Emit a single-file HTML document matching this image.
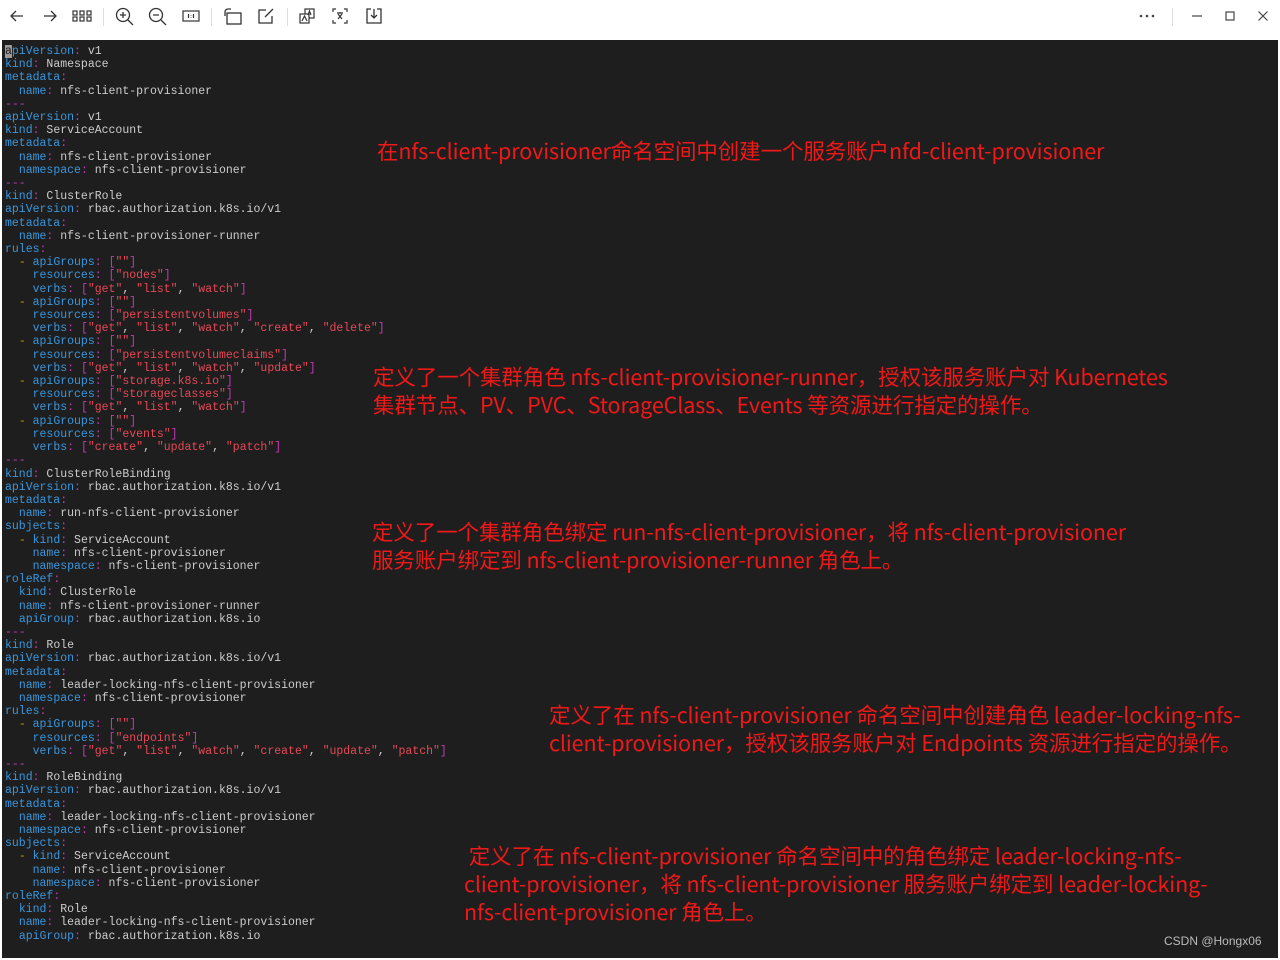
<!DOCTYPE html>
<html><head><meta charset="utf-8"><style>
html,body{margin:0;padding:0;width:1280px;height:960px;overflow:hidden;background:#fff;}
.tb{position:absolute;left:0;top:0;width:1280px;height:40px;background:#fff;}
.tb svg{position:absolute;top:7px;}
.sep{position:absolute;top:8px;width:1px;height:18px;background:#ddd;}
.dark{position:absolute;left:2px;top:40px;width:1276px;height:918px;background:#1e1e1e;}
pre{position:absolute;left:5px;top:45px;margin:0;font-family:"Liberation Mono",monospace;font-size:11.5px;line-height:13.21px;color:#cccccc;}
.k{color:#3a96dd}.c{color:#c239b3}.s{color:#e74856}.d{color:#c19c00}
.cur{background:#9a9a9a;color:#1e1e1e}
.a{position:absolute;color:#f01818;font-family:"Noto Sans CJK SC","Liberation Sans",sans-serif;font-size:21.5px;line-height:28px;white-space:nowrap;letter-spacing:-0.1px}
.wm{position:absolute;left:1164px;top:934px;color:#bbb;font-family:"Liberation Sans",sans-serif;font-size:12px;}
</style></head><body>
<div class="tb">
<svg style="left:8px" width="18" height="18" viewBox="0 0 18 18" fill="none" stroke="#333" stroke-width="1.3"><path d="M15 9H3M8 4L3 9l5 5"/></svg>
<svg style="left:41px" width="18" height="18" viewBox="0 0 18 18" fill="none" stroke="#333" stroke-width="1.3"><path d="M3 9h12M10 4l5 5-5 5"/></svg>
<svg style="left:72px" width="20" height="18" viewBox="0 0 20 18" fill="none" stroke="#333" stroke-width="1.2"><rect x="1" y="4" width="4" height="4"/><rect x="8" y="4" width="4" height="4"/><rect x="15" y="4" width="4" height="4"/><rect x="1" y="10" width="4" height="4"/><rect x="8" y="10" width="4" height="4"/><rect x="15" y="10" width="4" height="4"/></svg>
<div class="sep" style="left:103px"></div>
<svg style="left:115px" width="20" height="20" viewBox="0 0 20 20" fill="none" stroke="#333" stroke-width="1.3"><circle cx="8" cy="8" r="6.5"/><path d="M13 13l5 5M5 8h6M8 5v6"/></svg>
<svg style="left:148px" width="20" height="20" viewBox="0 0 20 20" fill="none" stroke="#333" stroke-width="1.3"><circle cx="8" cy="8" r="6.5"/><path d="M13 13l5 5M5 8h6"/></svg>
<svg style="left:181px" width="20" height="18" viewBox="0 0 20 18" fill="none" stroke="#333" stroke-width="1.2"><rect x="2" y="4" width="16" height="10"/><path d="M7.5 7v4M12.5 7v4M10 8v.5M10 10v.5"/></svg>
<div class="sep" style="left:211px"></div>
<svg style="left:223px" width="20" height="20" viewBox="0 0 20 20" fill="none" stroke="#333" stroke-width="1.3"><rect x="4" y="6" width="14" height="11"/><path d="M2 9V5a3 3 0 0 1 3-3h3"/></svg>
<svg style="left:257px" width="18" height="18" viewBox="0 0 18 18" fill="none" stroke="#333" stroke-width="1.3"><path d="M15 9v7H2V3h7M8 10l8-8"/></svg>
<div class="sep" style="left:287px"></div>
<svg style="left:298px" width="18" height="18" viewBox="0 0 18 18" fill="none" stroke="#333" stroke-width="1.2"><rect x="7" y="2" width="9" height="9"/><rect x="2" y="7" width="9" height="9" fill="#fff"/><path d="M4 14l2.5-5 2.5 5M10 8l1.5-4 1.5 4"/></svg>
<svg style="left:331px" width="18" height="18" viewBox="0 0 18 18" fill="none" stroke="#333" stroke-width="1.2"><path d="M2 5V2h3M13 2h3v3M16 13v3h-3M5 16H2v-3M6 6h6M9 5v1M7 12l4-5M7 7l4 5"/></svg>
<svg style="left:365px" width="18" height="18" viewBox="0 0 18 18" fill="none" stroke="#333" stroke-width="1.3"><path d="M6 2H2v14h14V2h-4M9 2v9M6 8l3 3 3-3"/></svg>
<svg style="left:1138px" width="18" height="18" viewBox="0 0 18 18" fill="#444"><circle cx="3" cy="9" r="1.3"/><circle cx="9" cy="9" r="1.3"/><circle cx="15" cy="9" r="1.3"/></svg>
<div class="sep" style="left:1172px"></div>
<svg style="left:1188px" width="18" height="18" viewBox="0 0 18 18" fill="none" stroke="#444" stroke-width="1.2"><path d="M4 9h10"/></svg>
<svg style="left:1221px" width="18" height="18" viewBox="0 0 18 18" fill="none" stroke="#444" stroke-width="1.2"><rect x="5" y="5" width="8" height="8"/></svg>
<svg style="left:1254px" width="18" height="18" viewBox="0 0 18 18" fill="none" stroke="#444" stroke-width="1.2"><path d="M4.5 4.5l9 9M13.5 4.5l-9 9"/></svg>
</div>
<div class="dark"></div>
<pre><span class="k"><span class="cur">a</span>piVersion</span><span class="c">:</span> v1
<span class="k">kind</span><span class="c">:</span> Namespace
<span class="k">metadata</span><span class="c">:</span>
  <span class="k">name</span><span class="c">:</span> nfs-client-provisioner
<span class="c">---</span>
<span class="k">apiVersion</span><span class="c">:</span> v1
<span class="k">kind</span><span class="c">:</span> ServiceAccount
<span class="k">metadata</span><span class="c">:</span>
  <span class="k">name</span><span class="c">:</span> nfs-client-provisioner
  <span class="k">namespace</span><span class="c">:</span> nfs-client-provisioner
<span class="c">---</span>
<span class="k">kind</span><span class="c">:</span> ClusterRole
<span class="k">apiVersion</span><span class="c">:</span> rbac.authorization.k8s.io/v1
<span class="k">metadata</span><span class="c">:</span>
  <span class="k">name</span><span class="c">:</span> nfs-client-provisioner-runner
<span class="k">rules</span><span class="c">:</span>
  <span class="d">-</span> <span class="k">apiGroups</span><span class="c">:</span> <span class="c">[</span><span class="s">""</span><span class="c">]</span>
    <span class="k">resources</span><span class="c">:</span> <span class="c">[</span><span class="s">"nodes"</span><span class="c">]</span>
    <span class="k">verbs</span><span class="c">:</span> <span class="c">[</span><span class="s">"get"</span>, <span class="s">"list"</span>, <span class="s">"watch"</span><span class="c">]</span>
  <span class="d">-</span> <span class="k">apiGroups</span><span class="c">:</span> <span class="c">[</span><span class="s">""</span><span class="c">]</span>
    <span class="k">resources</span><span class="c">:</span> <span class="c">[</span><span class="s">"persistentvolumes"</span><span class="c">]</span>
    <span class="k">verbs</span><span class="c">:</span> <span class="c">[</span><span class="s">"get"</span>, <span class="s">"list"</span>, <span class="s">"watch"</span>, <span class="s">"create"</span>, <span class="s">"delete"</span><span class="c">]</span>
  <span class="d">-</span> <span class="k">apiGroups</span><span class="c">:</span> <span class="c">[</span><span class="s">""</span><span class="c">]</span>
    <span class="k">resources</span><span class="c">:</span> <span class="c">[</span><span class="s">"persistentvolumeclaims"</span><span class="c">]</span>
    <span class="k">verbs</span><span class="c">:</span> <span class="c">[</span><span class="s">"get"</span>, <span class="s">"list"</span>, <span class="s">"watch"</span>, <span class="s">"update"</span><span class="c">]</span>
  <span class="d">-</span> <span class="k">apiGroups</span><span class="c">:</span> <span class="c">[</span><span class="s">"storage.k8s.io"</span><span class="c">]</span>
    <span class="k">resources</span><span class="c">:</span> <span class="c">[</span><span class="s">"storageclasses"</span><span class="c">]</span>
    <span class="k">verbs</span><span class="c">:</span> <span class="c">[</span><span class="s">"get"</span>, <span class="s">"list"</span>, <span class="s">"watch"</span><span class="c">]</span>
  <span class="d">-</span> <span class="k">apiGroups</span><span class="c">:</span> <span class="c">[</span><span class="s">""</span><span class="c">]</span>
    <span class="k">resources</span><span class="c">:</span> <span class="c">[</span><span class="s">"events"</span><span class="c">]</span>
    <span class="k">verbs</span><span class="c">:</span> <span class="c">[</span><span class="s">"create"</span>, <span class="s">"update"</span>, <span class="s">"patch"</span><span class="c">]</span>
<span class="c">---</span>
<span class="k">kind</span><span class="c">:</span> ClusterRoleBinding
<span class="k">apiVersion</span><span class="c">:</span> rbac.authorization.k8s.io/v1
<span class="k">metadata</span><span class="c">:</span>
  <span class="k">name</span><span class="c">:</span> run-nfs-client-provisioner
<span class="k">subjects</span><span class="c">:</span>
  <span class="d">-</span> <span class="k">kind</span><span class="c">:</span> ServiceAccount
    <span class="k">name</span><span class="c">:</span> nfs-client-provisioner
    <span class="k">namespace</span><span class="c">:</span> nfs-client-provisioner
<span class="k">roleRef</span><span class="c">:</span>
  <span class="k">kind</span><span class="c">:</span> ClusterRole
  <span class="k">name</span><span class="c">:</span> nfs-client-provisioner-runner
  <span class="k">apiGroup</span><span class="c">:</span> rbac.authorization.k8s.io
<span class="c">---</span>
<span class="k">kind</span><span class="c">:</span> Role
<span class="k">apiVersion</span><span class="c">:</span> rbac.authorization.k8s.io/v1
<span class="k">metadata</span><span class="c">:</span>
  <span class="k">name</span><span class="c">:</span> leader-locking-nfs-client-provisioner
  <span class="k">namespace</span><span class="c">:</span> nfs-client-provisioner
<span class="k">rules</span><span class="c">:</span>
  <span class="d">-</span> <span class="k">apiGroups</span><span class="c">:</span> <span class="c">[</span><span class="s">""</span><span class="c">]</span>
    <span class="k">resources</span><span class="c">:</span> <span class="c">[</span><span class="s">"endpoints"</span><span class="c">]</span>
    <span class="k">verbs</span><span class="c">:</span> <span class="c">[</span><span class="s">"get"</span>, <span class="s">"list"</span>, <span class="s">"watch"</span>, <span class="s">"create"</span>, <span class="s">"update"</span>, <span class="s">"patch"</span><span class="c">]</span>
<span class="c">---</span>
<span class="k">kind</span><span class="c">:</span> RoleBinding
<span class="k">apiVersion</span><span class="c">:</span> rbac.authorization.k8s.io/v1
<span class="k">metadata</span><span class="c">:</span>
  <span class="k">name</span><span class="c">:</span> leader-locking-nfs-client-provisioner
  <span class="k">namespace</span><span class="c">:</span> nfs-client-provisioner
<span class="k">subjects</span><span class="c">:</span>
  <span class="d">-</span> <span class="k">kind</span><span class="c">:</span> ServiceAccount
    <span class="k">name</span><span class="c">:</span> nfs-client-provisioner
    <span class="k">namespace</span><span class="c">:</span> nfs-client-provisioner
<span class="k">roleRef</span><span class="c">:</span>
  <span class="k">kind</span><span class="c">:</span> Role
  <span class="k">name</span><span class="c">:</span> leader-locking-nfs-client-provisioner
  <span class="k">apiGroup</span><span class="c">:</span> rbac.authorization.k8s.io</pre>
<div class="a" style="left:377px;top:137px">在nfs-client-provisioner命名空间中创建一个服务账户nfd-client-provisioner</div>
<div class="a" style="left:373px;top:363px">定义了一个集群角色 nfs-client-provisioner-runner，授权该服务账户对 Kubernetes<br>集群节点、PV、PVC、StorageClass、Events 等资源进行指定的操作。</div>
<div class="a" style="left:372px;top:518px">定义了一个集群角色绑定 run-nfs-client-provisioner，将 nfs-client-provisioner<br>服务账户绑定到 nfs-client-provisioner-runner 角色上。</div>
<div class="a" style="left:549px;top:701px">定义了在 nfs-client-provisioner 命名空间中创建角色 leader-locking-nfs-<br>client-provisioner，授权该服务账户对 Endpoints 资源进行指定的操作。</div>
<div class="a" style="left:464px;top:842px">&nbsp;定义了在 nfs-client-provisioner 命名空间中的角色绑定 leader-locking-nfs-<br>client-provisioner，将 nfs-client-provisioner 服务账户绑定到 leader-locking-<br>nfs-client-provisioner 角色上。</div>
<div class="wm">CSDN @Hongx06</div>
</body></html>
